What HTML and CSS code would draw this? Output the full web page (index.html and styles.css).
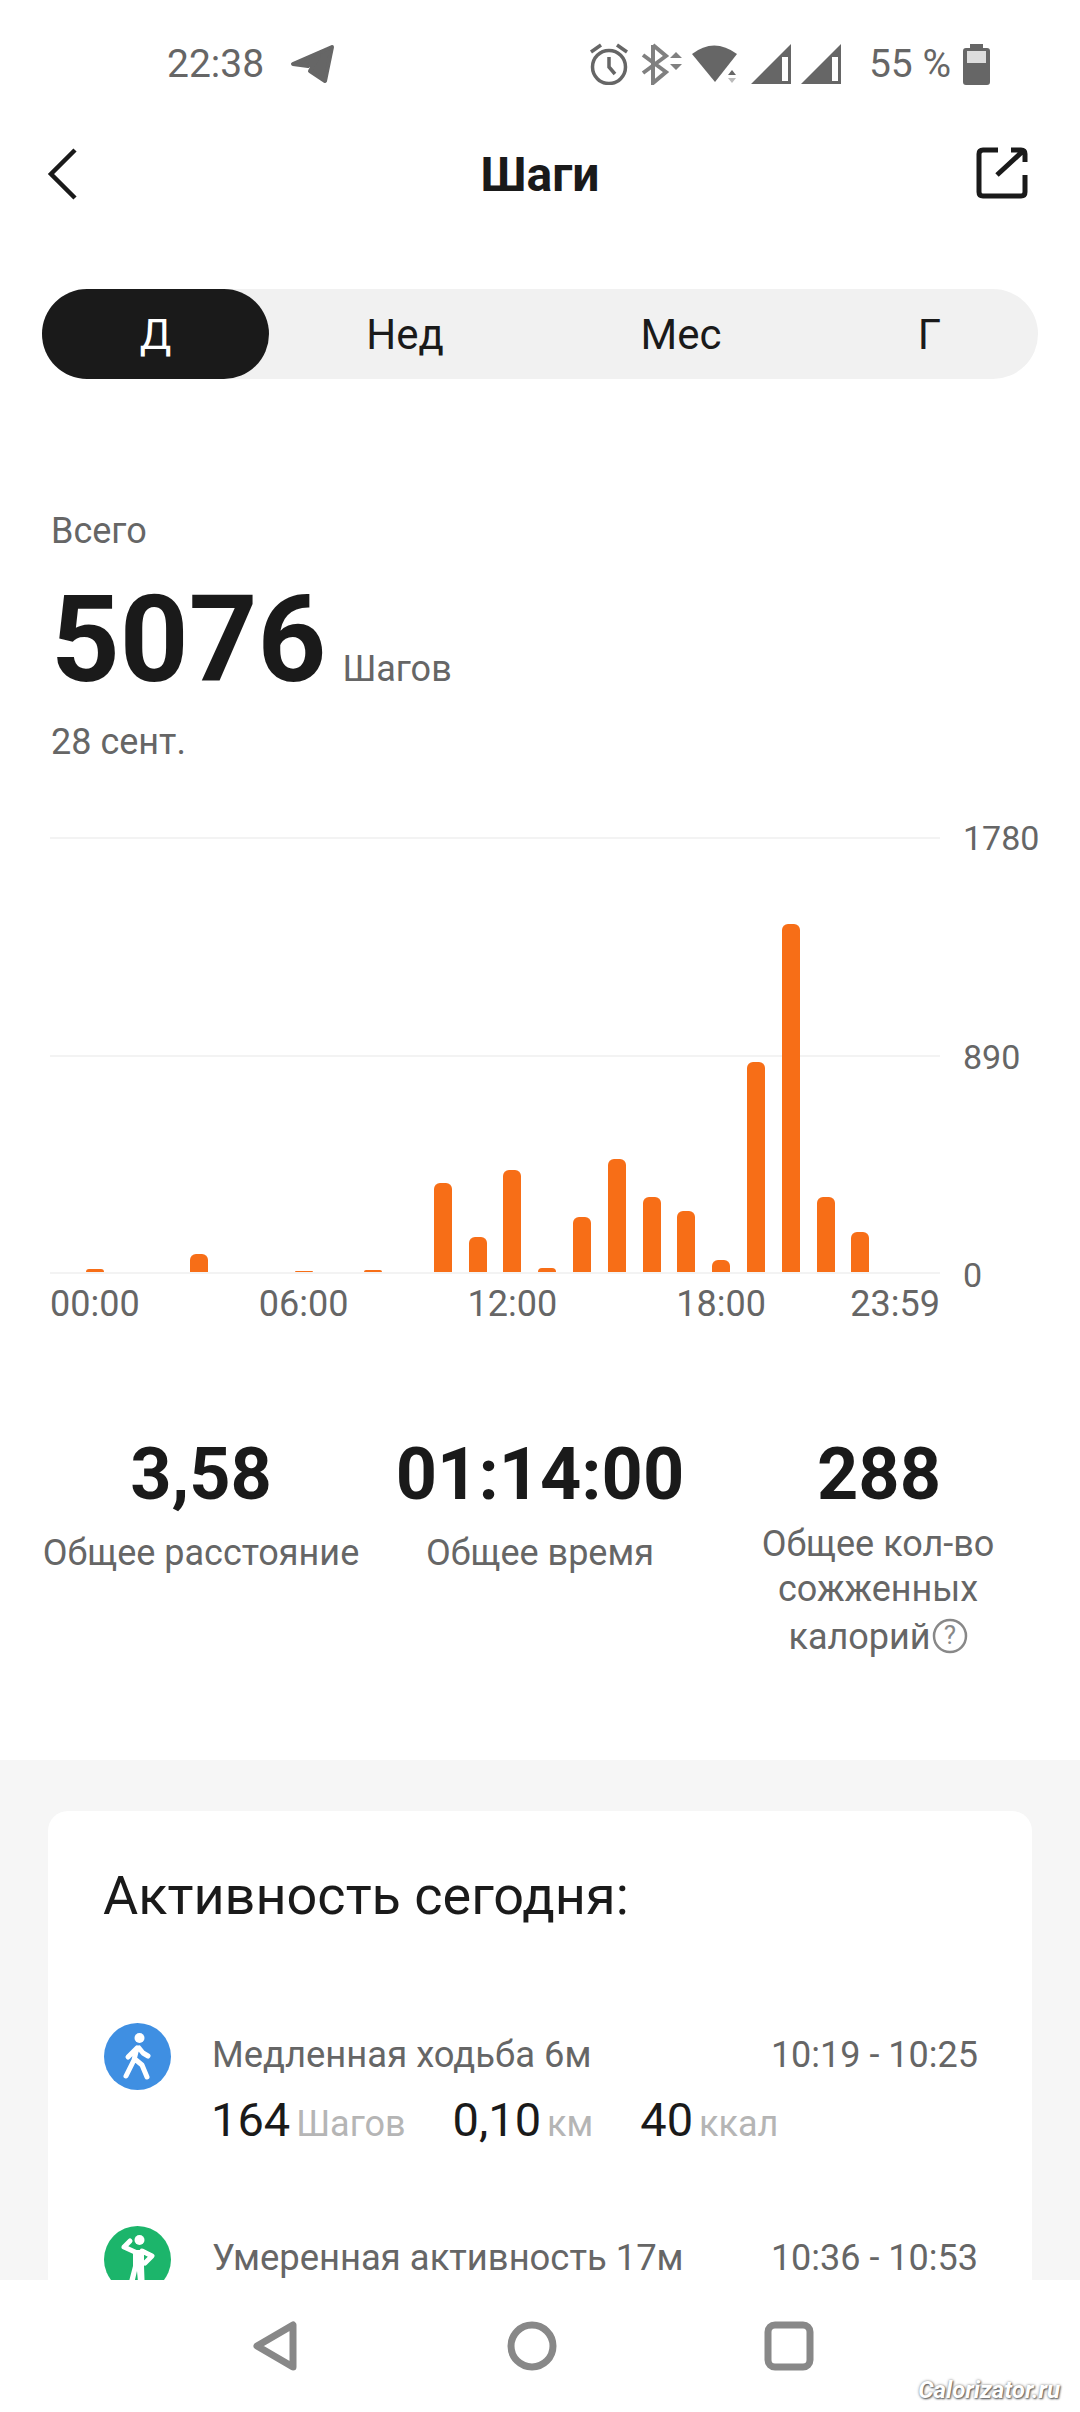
FILE: index.html
```html
<!DOCTYPE html>
<html lang="ru">
<head>
  <meta charset="UTF-8" />
  <meta name="viewport" content="width=device-width, initial-scale=1.0"/>
  <title>Шаги</title>
  <link rel="stylesheet" href="styles.css">
</head>
<body>
  <div class="screen">
    <div class="content">
      <div class="status">
        <div class="status-left">
          <span class="clock">22:38</span>
          <svg class="icon-plane" viewBox="0 0 46 40"><path d="M42 3 3 20l15 2 11-10-9 15 15 10z"/></svg>
        </div>
        <div class="status-right">
          <svg class="icon-alarm" viewBox="0 0 42 42">
            <circle cx="20" cy="24" r="16.5"/>
            <path d="M20 14v10l6 7M2 9 12 2M38 9 28 2"/>
          </svg>
          <svg class="icon-bt" viewBox="0 0 42 42">
            <path d="M12 2v38l13-11L2 12M12 2l13 11L2 30"/>
            <path class="solid" d="M29 15l6-6 6 6zM29 21h12l-6 6z"/>
          </svg>
          <svg class="icon-wifi" viewBox="0 0 46 38">
            <path class="solid" d="M0 9Q22-8 45 9l-22 28z"/>
            <path class="solid" d="M36 30l4-5 4 5z"/>
            <path class="faint" d="M36 33h8l-4 5z"/>
          </svg>
          <svg class="icon-signal" viewBox="0 0 40 40"><path d="M0 40 40 0v40zM31 13v24h6V13z" fill-rule="evenodd"/></svg>
          <svg class="icon-signal" viewBox="0 0 40 40"><path d="M0 40 40 0v40zM31 13v24h6V13z" fill-rule="evenodd"/></svg>
          <span class="battery-text">55 %</span>
          <svg class="icon-battery" viewBox="0 0 27 41">
            <path d="M7 0h13v4h4q3 0 3 3v31q0 3-3 3H3q-3 0-3-3V7q0-3 3-3h4z"/>
            <rect class="level" x="4" y="7" width="19" height="12"/>
          </svg>
        </div>
      </div>

      <div class="topbar">
        <svg class="icon-back" viewBox="0 0 34 54"><path d="M29 3 5 27l24 24"/></svg>
        <h1>Шаги</h1>
        <svg class="icon-share" viewBox="0 0 52 52">
          <path d="M22 3H7Q3 3 3 7v38q0 4 4 4h38q4 0 4-4V28"/>
          <path d="M35 3h10q4 0 4 4v8M21 28 46 5"/>
        </svg>
      </div>

      <div class="tabs">
        <div class="tab active">Д</div>
        <div class="tab">Нед</div>
        <div class="tab">Мес</div>
        <div class="tab">Г</div>
      </div>

      <div class="summary">
        <div class="summary-label">Всего</div>
        <div class="summary-total"><span class="summary-num">5076</span><span class="summary-unit">Шагов</span></div>
        <div class="summary-label">28 сент.</div>
      </div>

      <div class="chart">
        <div class="plot">
          <div class="gridline"></div>
          <div class="gridline"></div>
          <div class="gridline"></div>
          <div class="bars">
            <div class="slot"><div class="bar" style="height:3px"></div></div>
            <div class="slot"></div>
            <div class="slot"></div>
            <div class="slot"><div class="bar" style="height:18px"></div></div>
            <div class="slot"></div>
            <div class="slot"></div>
            <div class="slot"><div class="bar" style="height:1px"></div></div>
            <div class="slot"></div>
            <div class="slot"><div class="bar" style="height:2px"></div></div>
            <div class="slot"></div>
            <div class="slot"><div class="bar" style="height:89px"></div></div>
            <div class="slot"><div class="bar" style="height:35px"></div></div>
            <div class="slot"><div class="bar" style="height:102px"></div></div>
            <div class="slot"><div class="bar" style="height:4px"></div></div>
            <div class="slot"><div class="bar" style="height:55px"></div></div>
            <div class="slot"><div class="bar" style="height:113px"></div></div>
            <div class="slot"><div class="bar" style="height:75px"></div></div>
            <div class="slot"><div class="bar" style="height:61px"></div></div>
            <div class="slot"><div class="bar" style="height:12px"></div></div>
            <div class="slot"><div class="bar" style="height:210px"></div></div>
            <div class="slot"><div class="bar" style="height:348px"></div></div>
            <div class="slot"><div class="bar" style="height:75px"></div></div>
            <div class="slot"><div class="bar" style="height:40px"></div></div>
            <div class="slot"></div>
          </div>
        </div>
        <div class="y-axis">
          <span>1780</span>
          <span>890</span>
          <span>0</span>
        </div>
        <div class="x-axis">
          <span class="tick h0">00:00</span>
          <span class="tick h6">06:00</span>
          <span class="tick h12">12:00</span>
          <span class="tick h18">18:00</span>
          <span class="tick h23">23:59</span>
        </div>
      </div>

      <div class="stats">
        <div class="stat">
          <div class="stat-value">3,58</div>
          <div class="stat-label">Общее расстояние</div>
        </div>
        <div class="stat">
          <div class="stat-value">01:14:00</div>
          <div class="stat-label">Общее время</div>
        </div>
        <div class="stat stat-long">
          <div class="stat-value">288</div>
          <div class="stat-label">Общее кол-во сожженных</div>
          <div class="stat-last">
            <span>калорий</span>
            <svg class="icon-help" viewBox="0 0 36 36"><circle cx="18" cy="18" r="16"/><text x="18" y="26" text-anchor="middle">?</text></svg>
          </div>
        </div>
      </div>

      <div class="activity-wrap">
        <div class="card">
          <h2>Активность сегодня:</h2>

          <div class="row">
            <svg class="row-icon blue" viewBox="0 0 67 67">
              <circle cx="33.5" cy="33.5" r="33.5"/>
              <circle class="figure-head" cx="35.5" cy="15" r="5"/>
              <path class="figure" d="M33 25 30 37l-8 16M32 37l6 5 5 12M33 25l-9 9M35 25l4 5 5 3"/>
            </svg>
            <div class="row-main">
              <div class="row-head">
                <span>Медленная ходьба 6м</span>
                <span class="row-time">10:19 - 10:25</span>
              </div>
              <div class="row-metrics">
                <span class="metric"><b>164</b><i>Шагов</i></span>
                <span class="metric"><b>0,10</b><i>км</i></span>
                <span class="metric"><b>40</b><i>ккал</i></span>
              </div>
            </div>
          </div>

          <div class="row">
            <svg class="row-icon green" viewBox="0 0 67 67">
              <circle cx="33.5" cy="33.5" r="33.5"/>
              <circle class="figure-head" cx="35.5" cy="14" r="5"/>
              <path class="figure-head" d="M29 24h11v16l1 27h-6l-2-22-5 22h-6l7-27z"/>
              <path class="figure" d="M31 26 20 21l6-6M38 25l10 5-7 7"/>
            </svg>
            <div class="row-main">
              <div class="row-head">
                <span>Умеренная активность 17м</span>
                <span class="row-time">10:36 - 10:53</span>
              </div>
            </div>
          </div>
        </div>
      </div>
    </div>

    <div class="navbar">
      <svg class="nav-icon" viewBox="0 0 50 50"><path d="M43 4v42L7 25z"/></svg>
      <svg class="nav-icon" viewBox="0 0 50 50"><circle cx="25" cy="25" r="21"/></svg>
      <svg class="nav-icon" viewBox="0 0 50 50"><rect x="4" y="4" width="42" height="42" rx="7"/></svg>
    </div>

    <div class="watermark">Calorizator.ru</div>
  </div>
</body>
</html>
```

FILE: styles.css
```css
* {
  box-sizing: border-box;
}

html, body {
  margin: 0;
  height: 100%;
}

body {
  font-family: Roboto, 'Liberation Sans', sans-serif;
  color: #1a1a1a;
  background: #fff;
}

.screen {
  position: relative;
  width: 1080px;
  height: 2412px;
  display: flex;
  flex-direction: column;
  overflow: hidden;
}

.content {
  flex: 1;
  min-height: 0;
  overflow: hidden;
}

/* status bar */
.status {
  height: 126px;
  padding: 2px 90px 0 167px;
  display: flex;
  align-items: center;
  justify-content: space-between;
  color: #666;
}

.status-left,
.status-right {
  display: flex;
  align-items: center;
}

.clock {
  font-size: 39px;
  margin-right: 26px;
}

.status svg path,
.status svg circle {
  fill: #666;
}

.icon-plane {
  width: 46px;
  height: 40px;
}

.icon-plane path {
  stroke: #666;
  stroke-width: 4;
  stroke-linejoin: round;
}

.status .icon-alarm circle,
.status .icon-alarm path {
  fill: none;
  stroke: #666;
  stroke-width: 3.5;
}

.icon-alarm {
  width: 42px;
  height: 42px;
  margin-right: 10px;
}

.icon-bt {
  width: 42px;
  height: 42px;
  margin-right: 9px;
}

.status .icon-bt path {
  fill: none;
  stroke: #808080;
  stroke-width: 4;
}

.status .icon-bt path.solid {
  fill: #808080;
  stroke: none;
}

.icon-wifi {
  width: 46px;
  height: 38px;
  margin-right: 13px;
}

.status .icon-wifi .faint {
  fill: #bbb;
}

.icon-signal {
  width: 40px;
  height: 40px;
  margin-right: 10px;
}

.battery-text {
  font-size: 39px;
  margin: 0 12px 0 18px;
}

.icon-battery {
  width: 27px;
  height: 41px;
}

.status .icon-battery .level {
  fill: #ddd;
}

/* title row */
.topbar {
  height: 96px;
  padding: 0 52px 0 46px;
  display: flex;
  align-items: center;
  justify-content: space-between;
}

.topbar h1 {
  margin: 0;
  font-size: 48px;
  font-weight: 700;
  flex: 1;
  text-align: center;
  padding-left: 24px;
}

.icon-back {
  width: 34px;
  height: 54px;
  fill: none;
  stroke: #1a1a1a;
  stroke-width: 4.5;
}

.icon-share {
  width: 52px;
  height: 52px;
  margin-top: -2px;
  fill: none;
  stroke: #1a1a1a;
  stroke-width: 5;
}

/* period switch */
.tabs {
  margin: 67px 42px 0;
  height: 90px;
  border-radius: 45px;
  background: #f1f1f1;
  display: grid;
  grid-template-columns: 227px 272px 280px 1fr;
}

.tab {
  display: flex;
  align-items: center;
  justify-content: center;
  font-size: 42px;
}

.tab.active {
  background: #1a1a1a;
  color: #fff;
  border-radius: 45px;
}

/* totals */
.summary {
  padding: 129px 51px 0;
}

.summary-label {
  font-size: 36px;
  line-height: 46px;
  color: #666;
}

.summary-total {
  display: flex;
  align-items: baseline;
  margin: 26px 0 19px;
  height: 120px;
}

.summary-num {
  font-size: 120px;
  font-weight: 700;
  line-height: 120px;
  margin-right: 16px;
}

.summary-unit {
  font-size: 36px;
  color: #666;
}

/* hourly chart */
.chart {
  margin: 72px 0 0 50px;
  width: 990px;
  display: grid;
  grid-template-columns: 890px 1fr;
  grid-template-rows: 437px auto;
}

.plot {
  position: relative;
  display: flex;
  flex-direction: column;
  justify-content: space-between;
}

.gridline {
  height: 2px;
  background: #f3f3f3;
}

.bars {
  position: absolute;
  left: 27.5px;
  right: 27.5px;
  bottom: 2px;
  top: 0;
  display: grid;
  grid-template-columns: repeat(24, minmax(0, 1fr));
  align-items: end;
}

.slot {
  display: flex;
  justify-content: center;
  align-items: flex-end;
}

.bar {
  width: 18px;
  background: #f76e17;
  border-radius: 6px 6px 0 0;
}

.y-axis {
  grid-column: 2;
  grid-row: 1 / span 2;
  align-self: start;
  height: 477px;
  margin-top: -19px;
  padding-left: 23px;
  display: flex;
  flex-direction: column;
  justify-content: space-between;
  font-size: 34px;
  line-height: 40px;
  color: #666;
}

.y-axis span {
  height: 40px;
}

.x-axis {
  grid-column: 1;
  grid-row: 2;
  padding: 10px 27.5px 0;
  display: grid;
  grid-template-columns: repeat(24, minmax(0, 1fr));
  font-size: 36px;
  line-height: 40px;
  color: #666;
}

.tick {
  display: flex;
  justify-content: center;
  white-space: nowrap;
}

.h0 { grid-column: 1; grid-row: 1; }
.h6 { grid-column: 7; grid-row: 1; }
.h12 { grid-column: 13; grid-row: 1; }
.h18 { grid-column: 19; grid-row: 1; }
.h23 { grid-column: 24; grid-row: 1; }

/* three figures under the chart */
.stats {
  margin-top: 109px;
  height: 327px;
  display: grid;
  grid-template-columns: 402px 276px 402px;
}

.stat {
  text-align: center;
}

.stat-value {
  font-size: 72px;
  font-weight: 700;
  line-height: 84px;
  white-space: nowrap;
  display: flex;
  justify-content: center;
}

.stat-label {
  margin-top: 13px;
  font-size: 36px;
  line-height: 46px;
  color: #666;
  white-space: nowrap;
}

.stat-long .stat-label {
  margin: 5px auto 0;
  white-space: normal;
  width: 270px;
  line-height: 45px;
  padding-right: 2px;
}

.stat-last {
  margin-top: 3px;
  padding-right: 2px;
  display: flex;
  justify-content: center;
  align-items: center;
  gap: 1px;
  font-size: 36px;
  line-height: 45px;
  color: #666;
}

.icon-help {
  width: 36px;
  height: 36px;
  margin-top: -3px;
  fill: none;
  stroke: #888;
  stroke-width: 2.5;
}

.icon-help text {
  font-size: 26px;
  fill: #888;
  stroke: none;
}

/* today's activity */
.activity-wrap {
  background: #f6f6f6;
  padding: 51px 48px 0;
  height: 800px;
}

.card {
  background: #fff;
  border-radius: 20px;
  height: 900px;
  padding: 53px 54px 0 56px;
}

.card h2 {
  margin: 0 0 95px -1px;
  font-size: 54px;
  line-height: 64px;
  font-weight: 400;
}

.row {
  display: flex;
  align-items: flex-start;
  height: 203px;
}

.row-icon {
  flex: none;
  width: 67px;
  height: 67px;
  margin-right: 41px;
}

.row-icon.blue > circle:first-child {
  fill: #3f8fe2;
}

.row-icon.green > circle:first-child {
  fill: #1cb56b;
}

.figure-head {
  fill: #fff;
}

.figure {
  fill: none;
  stroke: #fff;
  stroke-width: 5;
  stroke-linecap: round;
  stroke-linejoin: round;
}

.row-main {
  flex: 1;
  padding-top: 10px;
}

.row-head {
  display: flex;
  justify-content: space-between;
  align-items: baseline;
  font-size: 36.4px;
  line-height: 44px;
  color: #666;
}

.row-time {
  font-size: 36px;
}

.row-metrics {
  margin: 15px 0 0 -1px;
  display: flex;
  gap: 47px;
}

.metric {
  display: flex;
  align-items: baseline;
}

.metric b {
  font-size: 47px;
  font-weight: 400;
  line-height: 56px;
  margin-right: 6px;
}

.metric i {
  font-style: normal;
  font-size: 36px;
  color: #b5b5b5;
}

/* system navigation */
.navbar {
  flex: none;
  height: 132px;
  background: #fff;
  padding: 41px 0 0 250px;
  display: flex;
  align-items: flex-start;
  gap: 207px;
}

.nav-icon {
  width: 50px;
  height: 50px;
  fill: none;
  stroke: #888;
  stroke-width: 7;
  stroke-linejoin: round;
}

.watermark {
  position: absolute;
  right: 20px;
  bottom: 8px;
  font-size: 24px;
  font-weight: 700;
  font-style: italic;
  color: #fff;
  text-shadow: 1px 1px 2px #555, 0 0 3px #888;
}
```
